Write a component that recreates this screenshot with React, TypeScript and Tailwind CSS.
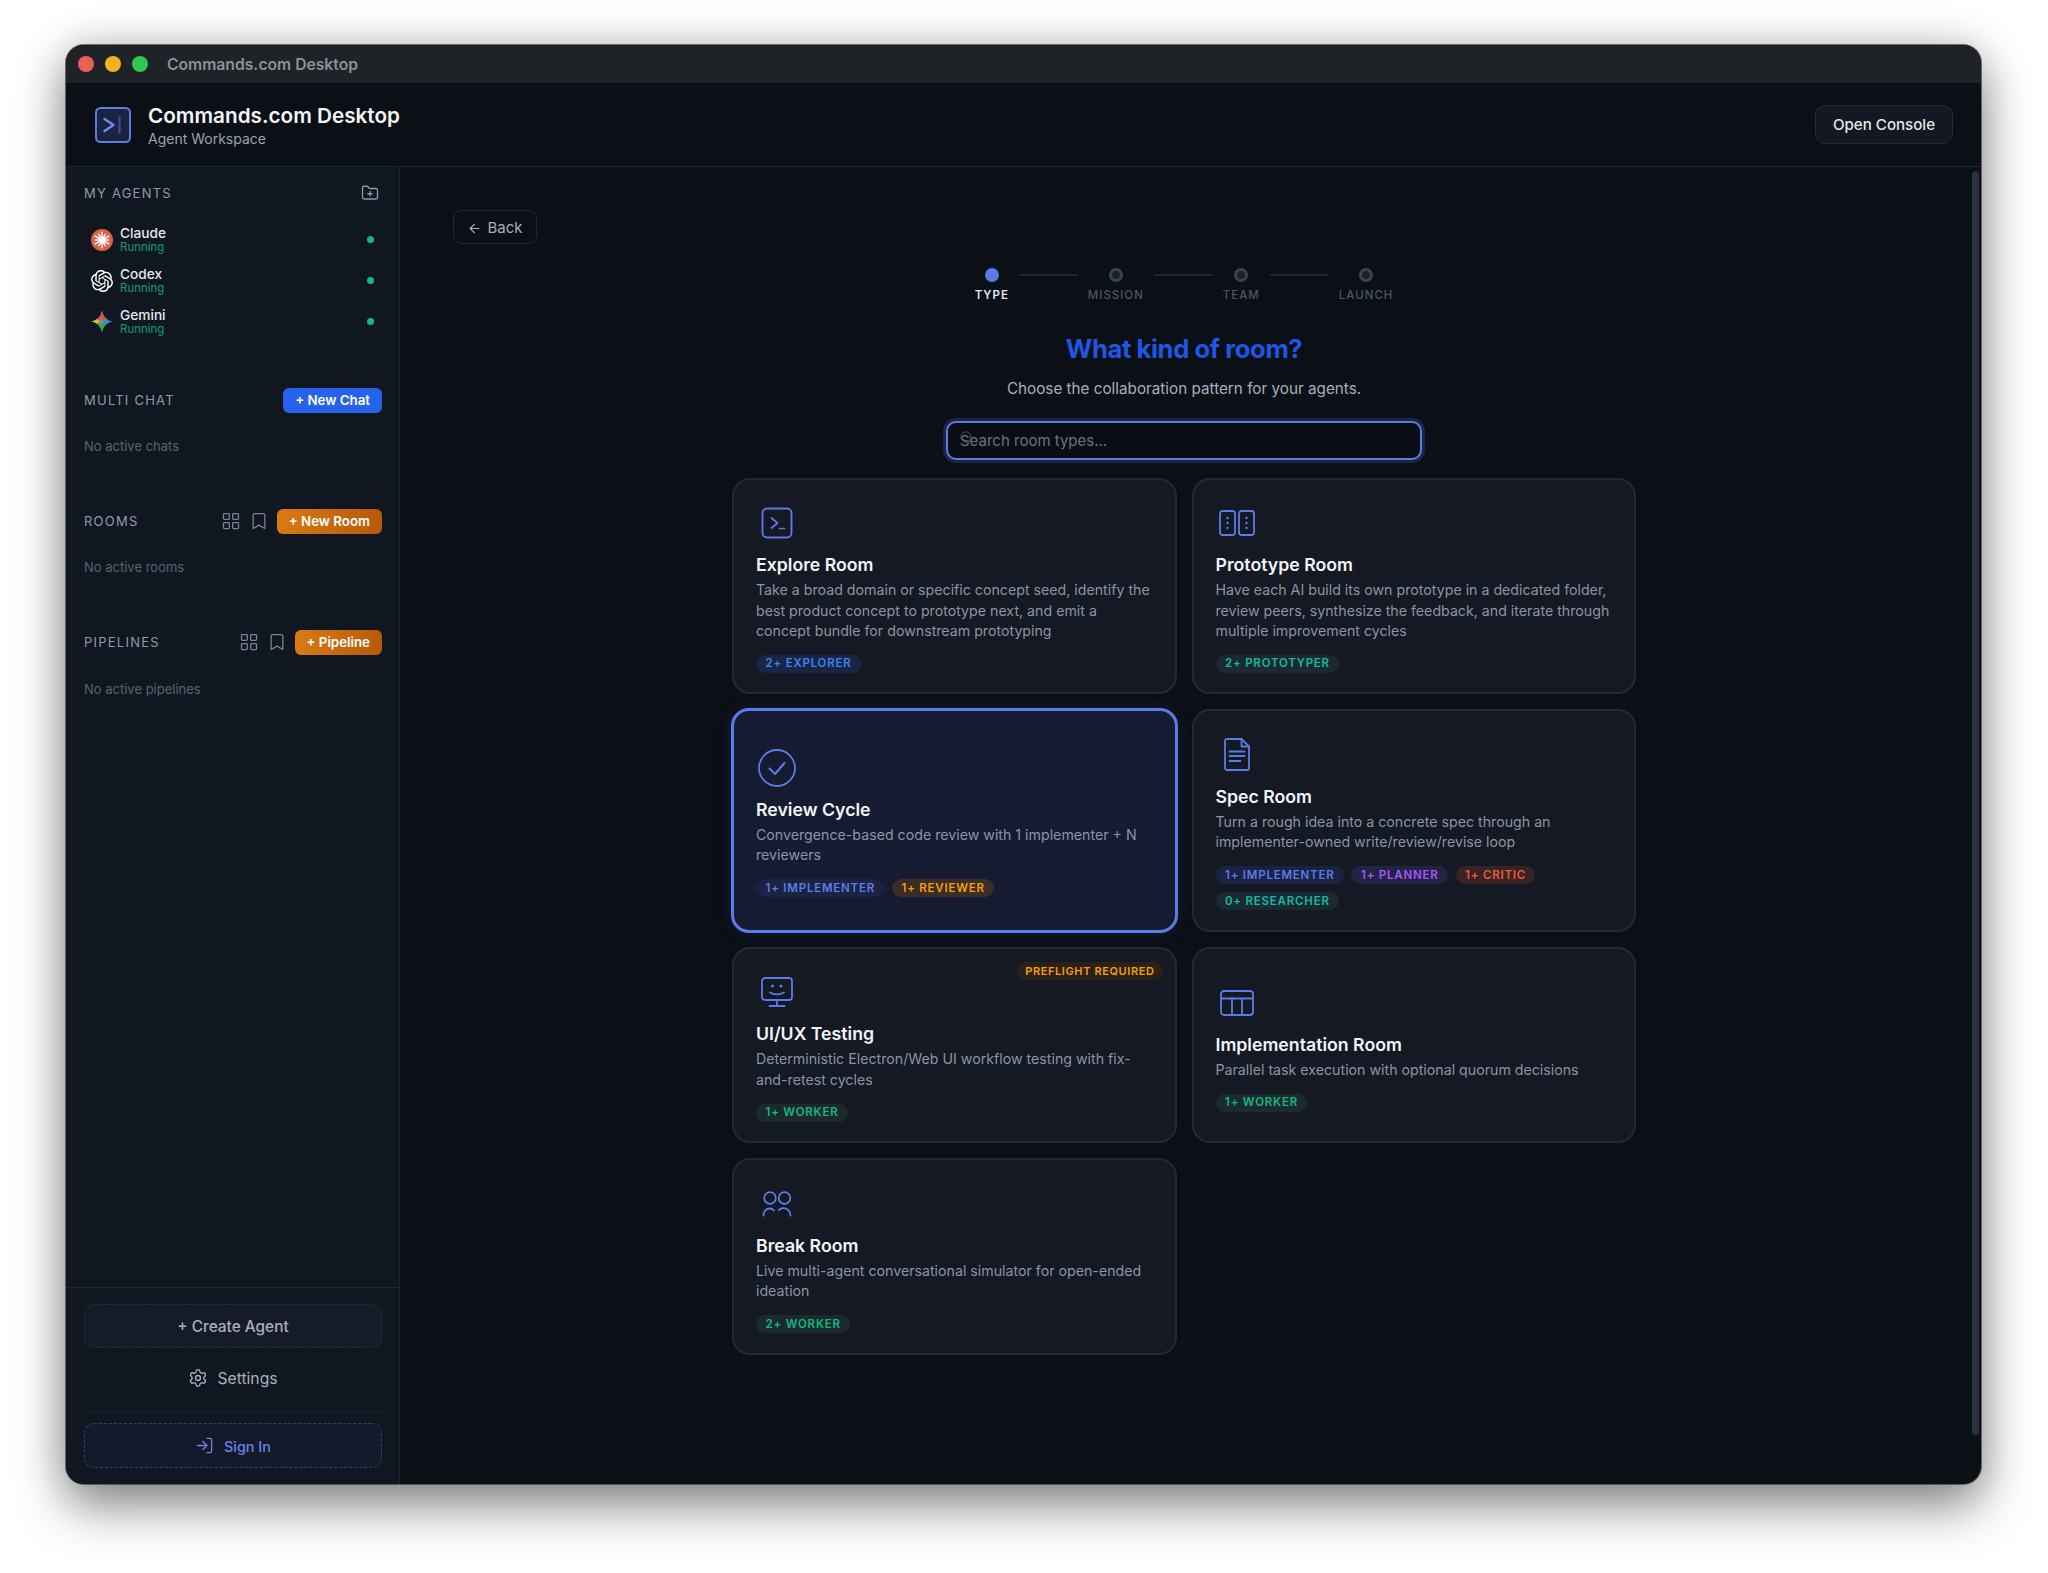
import { ArrowLeft, Bookmark, FolderPlus, LayoutGrid, LogIn, Search, Settings } from "lucide-react";
import { SiOpenai } from "react-icons/si";
import type { ReactNode } from "react";

const tones: Record<string, string> = {
  explorer: "bg-[#1a2543] text-[#3b82f6]",
  implementer: "bg-[#1c2342] text-[#5b7be6]",
  reviewer: "bg-[#392d25] text-[#f59e0b]",
  prototyper: "bg-[#1b2a31] text-[#14b8a6]",
  planner: "bg-[#222445] text-[#a855f7]",
  critic: "bg-[#372423] text-[#ef5a3c]",
  worker: "bg-[#1c2a2e] text-[#10b981]",
};

function TerminalIcon() {
  return (
    <svg width="32" height="32" viewBox="0 0 32 32" fill="none" stroke="currentColor" strokeWidth="1.9" strokeLinecap="round" strokeLinejoin="round">
      <rect x="1.500" y="1.500" width="29" height="29" rx="4.500" />
      <path d="M10.500 11l6 5-6 5" strokeWidth="1.700" />
      <path d="M18.500 21.500h5" strokeWidth="1.700" />
    </svg>
  );
}

function PhonesIcon() {
  return (
    <svg width="36" height="26" viewBox="0 0 36 26" fill="none" stroke="currentColor" strokeWidth="1.800">
      <rect x="1" y="1" width="15" height="24" rx="2.500" />
      <rect x="20" y="1" width="15" height="24" rx="2.500" />
      <g fill="currentColor" stroke="none">
        <circle cx="8.500" cy="8" r="1.200" />
        <circle cx="8.500" cy="13" r="1.200" />
        <circle cx="8.500" cy="18" r="1.200" />
        <circle cx="27.500" cy="8" r="1.200" />
        <circle cx="27.500" cy="13" r="1.200" />
        <circle cx="27.500" cy="18" r="1.200" />
      </g>
    </svg>
  );
}

function CheckCircleIcon() {
  return (
    <svg width="38" height="38" viewBox="0 0 38 38" fill="none" stroke="currentColor" strokeWidth="1.800" strokeLinecap="round" strokeLinejoin="round">
      <circle cx="19" cy="19" r="18" />
      <path d="M11.500 19.500l5.500 5.500 9.500-11" strokeWidth="2" />
    </svg>
  );
}

function FileIcon() {
  return (
    <svg width="26" height="33" viewBox="0 0 26 33" fill="none" stroke="currentColor" strokeWidth="1.800" strokeLinejoin="round">
      <path d="M3 1h14.500L25 8.500V30a2 2 0 0 1-2 2H3a2 2 0 0 1-2-2V3a2 2 0 0 1 2-2z" />
      <path d="M17.500 1v7.500H25" />
      <path d="M5.500 13.500h15M5.500 18h15M5.500 23h11" strokeLinecap="round" />
    </svg>
  );
}

function MonitorFaceIcon() {
  return (
    <svg width="32" height="30" viewBox="0 0 32 30" fill="none" stroke="currentColor" strokeWidth="1.800" strokeLinecap="round" strokeLinejoin="round">
      <rect x="1" y="1" width="30" height="22" rx="3" />
      <circle cx="11.500" cy="9" r="1.500" fill="currentColor" stroke="none" />
      <circle cx="20" cy="9" r="1.500" fill="currentColor" stroke="none" />
      <path d="M9 15.500c4 2.500 10 2.500 14 0" />
      <path d="M16 23v6M8.500 29h15" />
    </svg>
  );
}

function TableIcon() {
  return (
    <svg width="34" height="26" viewBox="0 0 34 26" fill="none" stroke="currentColor" strokeWidth="1.800">
      <rect x="1" y="1" width="32" height="24" rx="3" />
      <path d="M1 8.500h32M12 8.500V25M22 8.500V25" />
    </svg>
  );
}

function PeopleIcon() {
  return (
    <svg width="30" height="26" viewBox="0 0 30 26" fill="none" stroke="currentColor" strokeWidth="1.800" strokeLinecap="round">
      <circle cx="8" cy="7" r="5.800" />
      <circle cx="22.500" cy="7" r="5.800" />
      <path d="M1.500 24.500c0-4 2.500-7 6-7 2 0 3.500.8 4.500 2" />
      <path d="M17 19c1-1 2.500-1.800 4.500-1.800 4 0 7 3.300 7 7.300" />
    </svg>
  );
}

function LogoIcon() {
  return (
    <svg width="36" height="36" viewBox="0 0 36 36" fill="none">
      <rect x="1" y="1" width="34" height="34" rx="4.500" fill="#1a2340" stroke="#5b7be6" strokeWidth="2" />
      <path d="M9.500 12l9 6-9 6" stroke="#6b8cf5" strokeWidth="2.400" strokeLinecap="round" strokeLinejoin="round" />
      <path d="M24.500 9.500v17" stroke="#3f4f8a" strokeWidth="2.200" />
    </svg>
  );
}

function ClaudeIcon() {
  const rays = [0, 30, 60, 90, 120, 150, 180, 210, 240, 270, 300, 330];
  return (
    <svg width="22" height="22" viewBox="0 0 22 22">
      <circle cx="11" cy="11" r="11" fill="#dd6148" />
      {rays.map((r, i) => (
        <path key={r} d={`M11 11V${i % 2 ? 4.5 : 3.2}`} stroke="#fff" strokeWidth="1.500" strokeLinecap="round" transform={`rotate(${r} 11 11)`} />
      ))}
      <circle cx="11" cy="11" r="3" fill="#fff" />
    </svg>
  );
}

function GeminiIcon() {
  return (
    <svg width="23" height="23" viewBox="0 0 22 22">
      <path d="M11 0c.8 5.800 5 10 11 11-6 1-10.200 5.200-11 11-.8-5.800-5-10-11-11C6 10 10.200 5.800 11 0z" fill="#3f7fe8" />
      <path d="M11 0c.5 3.800 2.400 7 5.300 8.800L11 11 5.700 8.800C8.600 7 10.500 3.800 11 0z" fill="#d9534a" />
      <path d="M0 11c2.500-.4 4.500-1.200 5.700-2.200L11 11l-5.300 2.200C4.500 12.200 2.500 11.400 0 11z" fill="#f0b429" />
      <path d="M11 22c-.5-3.800-2.400-7-5.300-8.800L11 11l5.300 2.200C13.400 15 11.500 18.200 11 22z" fill="#34a853" />
      <circle cx="10" cy="11" r="2.600" fill="#7d8f8a" opacity="0.7" />
    </svg>
  );
}

function Agent({ icon, name }: { icon: ReactNode; name: string }) {
  return (
    <div className="flex h-[41px] items-center pl-[7px] pr-[8px]">
      <span className="flex w-[22px] justify-center text-white">{icon}</span>
      <div className="ml-[7px] flex-1">
        <p className="text-[13.700px] leading-[16px] font-medium text-[#e5e7eb]">{name}</p>
        <p className="text-[11.500px] leading-[13px] text-[#0f9d78]">Running</p>
      </div>
      <span className="h-[7px] w-[7px] rounded-full bg-[#10b981]" />
    </div>
  );
}

function SectionHead({ title, icons, button, tone }: { title: string; icons?: boolean; button: string; tone: string }) {
  return (
    <div className="flex h-[26px] items-center">
      <span className="flex-1 pt-[2px] text-[13px] tracking-[0.095em] text-[#8f99ab]">{title}</span>
      {icons && (
        <div className="mr-[8px] flex items-center gap-[8px] text-[#7a8494]">
          <LayoutGrid size={20} strokeWidth={1.500} />
          <Bookmark size={20} strokeWidth={1.500} />
        </div>
      )}
      <button className={`flex h-[25px] items-center rounded-[6px] px-[12px] pt-px text-[13.300px] font-semibold text-white ${tone}`}>{button}</button>
    </div>
  );
}

function Tag({ label, tone }: { label: string; tone: string }) {
  return <span className={`flex h-[18px] items-center rounded-full px-[9.500px] text-[11.500px] font-semibold tracking-[0.068em] ${tones[tone]}`}>{label}</span>;
}

type Room = {
  title: string;
  desc: string;
  icon: ReactNode;
  tags: { label: string; tone: string }[];
  selected?: boolean;
  preflight?: boolean;
};

const rooms: Room[] = [
  {
    title: "Explore Room",
    desc: "Take a broad domain or specific concept seed, identify the best product concept to prototype next, and emit a concept bundle for downstream prototyping",
    icon: <TerminalIcon />,
    tags: [{ label: "2+ EXPLORER", tone: "explorer" }],
  },
  {
    title: "Prototype Room",
    desc: "Have each AI build its own prototype in a dedicated folder, review peers, synthesize the feedback, and iterate through multiple improvement cycles",
    icon: <PhonesIcon />,
    tags: [{ label: "2+ PROTOTYPER", tone: "prototyper" }],
  },
  {
    title: "Review Cycle",
    desc: "Convergence-based code review with 1 implementer + N reviewers",
    icon: <CheckCircleIcon />,
    selected: true,
    tags: [
      { label: "1+ IMPLEMENTER", tone: "implementer" },
      { label: "1+ REVIEWER", tone: "reviewer" },
    ],
  },
  {
    title: "Spec Room",
    desc: "Turn a rough idea into a concrete spec through an implementer-owned write/review/revise loop",
    icon: <FileIcon />,
    tags: [
      { label: "1+ IMPLEMENTER", tone: "implementer" },
      { label: "1+ PLANNER", tone: "planner" },
      { label: "1+ CRITIC", tone: "critic" },
      { label: "0+ RESEARCHER", tone: "prototyper" },
    ],
  },
  {
    title: "UI/UX Testing",
    desc: "Deterministic Electron/Web UI workflow testing with fix-and-retest cycles",
    icon: <MonitorFaceIcon />,
    preflight: true,
    tags: [{ label: "1+ WORKER", tone: "worker" }],
  },
  {
    title: "Implementation Room",
    desc: "Parallel task execution with optional quorum decisions",
    icon: <TableIcon />,
    tags: [{ label: "1+ WORKER", tone: "worker" }],
  },
  {
    title: "Break Room",
    desc: "Live multi-agent conversational simulator for open-ended ideation",
    icon: <PeopleIcon />,
    tags: [{ label: "2+ WORKER", tone: "worker" }],
  },
];

function RoomCard({ room }: { room: Room }) {
  return (
    <div
      className={
        room.selected
          ? "relative -mx-px -my-px flex flex-col justify-center rounded-[18px] border-[3px] border-[#5b7be6] bg-[#151c32] px-[22px] pt-[3px] shadow-[0_0_18px_rgba(91,123,230,0.12)]"
          : "relative flex flex-col justify-center rounded-[18px] border-2 border-[#222a35] bg-[#141923] px-[22px] pt-[3px]"
      }
    >
      {room.preflight && (
        <span className="absolute top-[13px] right-[12px] flex h-[18px] items-center rounded-full bg-[#2b2119] px-[8px] text-[11px] font-semibold tracking-[0.055em] text-[#f59e0b]">
          PREFLIGHT REQUIRED
        </span>
      )}
      <div className="flex h-[42px] w-[42px] items-center justify-center text-[#5b7be6]">{room.icon}</div>
      <h3 className="mt-[9px] text-[17.700px] leading-[24px] font-semibold text-[#f3f4f6]">{room.title}</h3>
      <p className="mt-[3px] text-[14.200px] leading-[20.500px] text-[#8a94a6]">{room.desc}</p>
      <div className="mt-[13.500px] flex flex-wrap gap-x-[7.500px] gap-y-[8px]">
        {room.tags.map((t) => (
          <Tag key={t.label} label={t.label} tone={t.tone} />
        ))}
      </div>
    </div>
  );
}

const steps = ["TYPE", "MISSION", "TEAM", "LAUNCH"];

function Stepper() {
  return (
    <div className="mt-[24px] flex justify-center">
      {steps.map((s, i) => (
        <div key={s} className="flex items-start">
          {i > 0 && <span className="mx-[10px] mt-[6px] h-[2px] w-[59px] bg-[#1d2530]" />}
          <div className="flex flex-col items-center">
            {i === 0 ? (
              <span className="h-[14px] w-[14px] rounded-full bg-[#5b7be6]" />
            ) : (
              <span className="h-[14px] w-[14px] rounded-full border-[3px] border-[#3a4350] bg-[#1a212b]" />
            )}
            <span className={`mt-[6px] text-[11.500px] leading-[15px] font-medium tracking-[0.085em] ${i === 0 ? "font-semibold text-[#e5e7eb]" : "text-[#4b5563]"}`}>{s}</span>
          </div>
        </div>
      ))}
    </div>
  );
}

export default function App() {
  return (
    <div className="h-[1573px] overflow-hidden bg-white pt-[45px] pl-[66px] font-['Inter',sans-serif]">
      <div className="flex h-[1439px] w-[1915px] flex-col overflow-hidden rounded-[18px] bg-[#0b0f16] shadow-[0_0_0_1px_rgba(60,60,60,0.7),0_24px_50px_rgba(0,0,0,0.42),0_0_44px_rgba(0,0,0,0.2)]">
        <div className="flex h-[38px] shrink-0 items-center bg-[#1f2327] pl-[12px]">
          <span className="h-[16px] w-[16px] rounded-full bg-[#ec5f57]" />
          <span className="ml-[11px] h-[16px] w-[16px] rounded-full bg-[#f9b11b]" />
          <span className="ml-[11px] h-[16px] w-[16px] rounded-full bg-[#2fc84d]" />
          <span className="ml-[19px] pt-px text-[15.700px] font-semibold text-[#8c9099]">Commands.com Desktop</span>
        </div>

        <header className="flex h-[84px] shrink-0 items-center border-b border-[#1c2530] pr-[28px] pl-[29px]">
          <LogoIcon />
          <div className="ml-[17px] flex-1 pt-[2px]">
            <p className="text-[20.700px] leading-[26px] font-semibold text-[#f3f4f6]">Commands.com Desktop</p>
            <p className="text-[14px] leading-[19px] text-[#9ca3af]">Agent Workspace</p>
          </div>
          <button className="h-[39px] w-[138px] rounded-[10px] border border-[#232b38] bg-[#131822] pt-[2px] text-[15.100px] font-medium text-[#e5e7eb]">Open Console</button>
        </header>

        <div className="flex min-h-0 flex-1">
          <aside className="flex w-[334px] shrink-0 flex-col border-r border-[#1e2530] bg-[#111721]">
            <div className="pt-[13px] pr-[17px] pl-[18px]">
              <div className="flex h-[26px] items-center justify-between pr-[3px]">
                <span className="pt-[2px] text-[13px] tracking-[0.095em] text-[#8f99ab]">MY AGENTS</span>
                <FolderPlus size={18} strokeWidth={1.700} className="text-[#8f99ab]" />
              </div>
              <div className="mt-[13px]">
                <Agent name="Claude" icon={<ClaudeIcon />} />
                <Agent name="Codex" icon={<SiOpenai size={22} />} />
                <Agent name="Gemini" icon={<GeminiIcon />} />
              </div>
              <div className="mt-[45px]">
                <SectionHead title="MULTI CHAT" button="+ New Chat" tone="bg-[#2563eb]" />
                <p className="mt-[23px] text-[13px] leading-[20px] text-[#596270]">No active chats</p>
              </div>
              <div className="mt-[52px]">
                <SectionHead title="ROOMS" icons button="+ New Room" tone="bg-gradient-to-r from-[#d97a12] to-[#b7590c]" />
                <p className="mt-[23px] text-[13px] leading-[20px] text-[#596270]">No active rooms</p>
              </div>
              <div className="mt-[52px]">
                <SectionHead title="PIPELINES" icons button="+ Pipeline" tone="bg-gradient-to-r from-[#d97a12] to-[#b7590c]" />
                <p className="mt-[24px] text-[13px] leading-[20px] text-[#596270]">No active pipelines</p>
              </div>
            </div>

            <div className="mt-auto border-t border-[#1c2833] pt-[16px] pr-[17px] pb-[16px] pl-[18px]">
              <button className="h-[44px] w-full rounded-[10px] border border-dashed border-[#282f3b] bg-[#161c27] pt-[2px] text-[15.400px] font-medium text-[#a7b0bf]">+ Create Agent</button>
              <button className="mt-[10px] flex h-[40px] w-full items-center justify-center gap-[9px] text-[15.700px] text-[#a7b0bf]">
                <Settings size={20} strokeWidth={1.600} />
                <span className="pt-[2px]">Settings</span>
              </button>
              <div className="mt-[14px] h-px bg-[#1c222c]" />
              <button className="mt-[10px] flex h-[45px] w-full items-center justify-center gap-[10px] rounded-[10px] border border-dashed border-[#2f3d75] bg-[#141a2c] text-[14.400px] font-medium text-[#6b82e8]">
                <LogIn size={19} strokeWidth={1.700} />
                <span className="pt-[2px]">Sign In</span>
              </button>
            </div>
          </aside>

          <main className="relative min-w-0 flex-1 pt-[43px] pr-[13px]">
            <div className="pl-[53px]">
              <button className="flex h-[34px] w-[84px] items-center justify-center gap-[5px] rounded-[8px] border border-[#1f2733] pt-[2px] text-[15px] text-[#a7b0bf]">
                <ArrowLeft size={15} strokeWidth={1.700} />
                Back
              </button>
            </div>
            <Stepper />
            <h1 className="mt-[29px] text-center text-[25.600px] leading-[34px] font-bold tracking-[-0.015em] text-[#1f56e3]">What kind of room?</h1>
            <p className="mt-[12px] text-center text-[15.250px] leading-[22px] text-[#a7b0bf]">Choose the collaboration pattern for your agents.</p>
            <div className="relative mx-auto mt-[21px] h-[39px] w-[476px]">
              <Search size={15} strokeWidth={1.500} className="absolute top-[9px] left-[13px] text-[#4b5563]" />
              <input
                readOnly
                placeholder="Search room types..."
                className="h-full w-full rounded-[10px] border-2 border-[#5b7be6] bg-[#0a0d14] px-[12px] text-[15px] shadow-[0_0_0_3px_rgba(91,123,230,0.22)] outline-none placeholder:text-[#6b7280]"
              />
            </div>
            <div className="mx-auto mt-[18px] grid w-[904px] grid-cols-2 grid-rows-[216px_223px_196px_197px] gap-x-[15px] gap-y-[15px]">
              {rooms.map((r) => (
                <RoomCard key={r.title} room={r} />
              ))}
            </div>
            <span className="absolute top-[4px] right-[2px] h-[1264px] w-[7px] rounded-full bg-[#2a3240]" />
          </main>
        </div>
      </div>
    </div>
  );
}
